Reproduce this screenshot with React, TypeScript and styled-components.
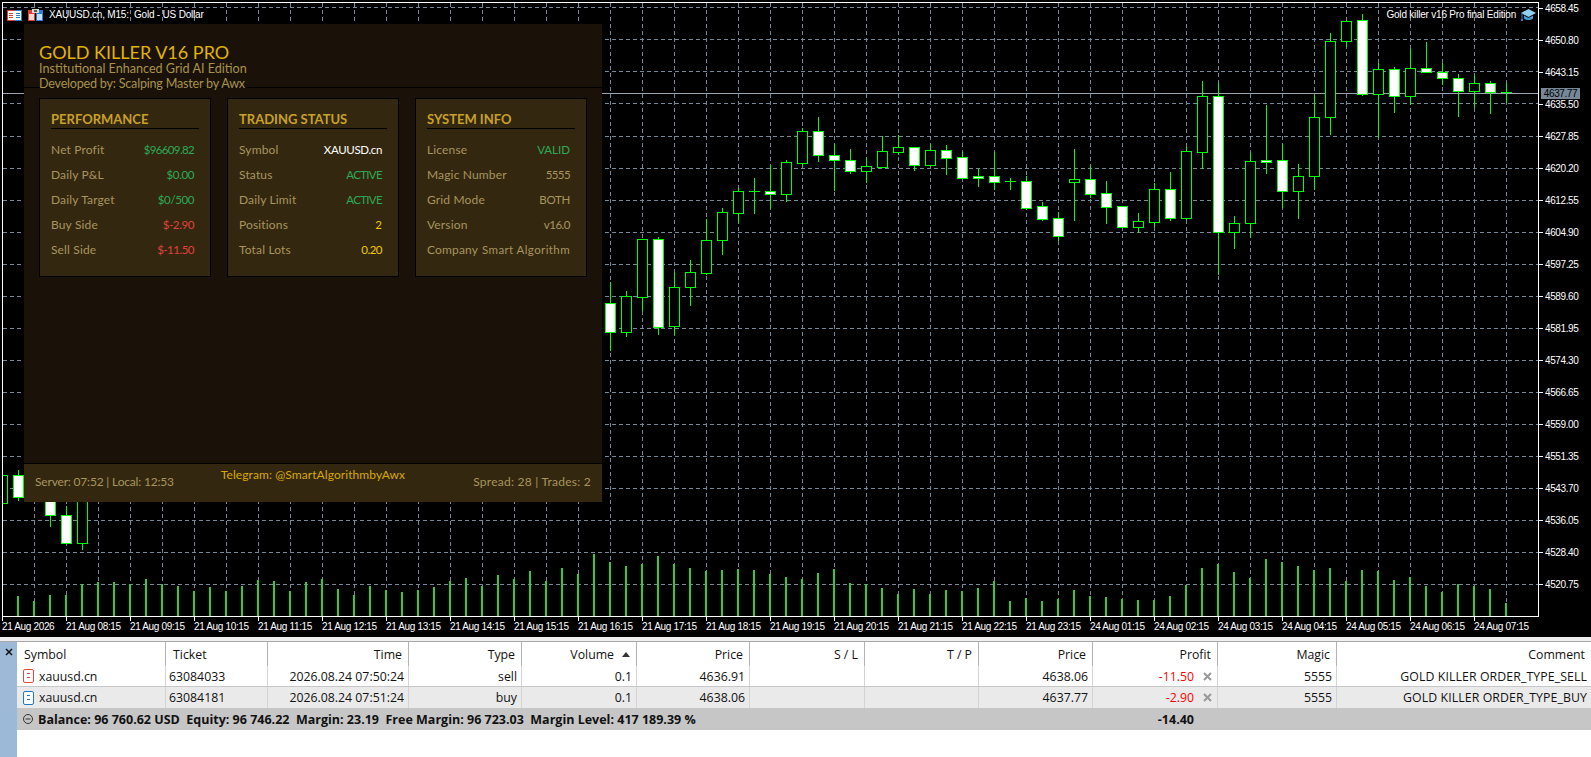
import styled, { createGlobalStyle } from "styled-components"

const GlobalStyle = createGlobalStyle`
  html, body { margin: 0; padding: 0; background: #f0f0f0; overflow: hidden; }
`

// k, wick top, wick bottom, body top, body bottom, filled
type Candle = [number, number, number, number, number, boolean]
const candles: Candle[] = [
  [-1, 470, 508, 475, 503, false], [0, 470, 501, 475, 497, true], [2, 495, 527, 500, 515, true],
  [3, 506, 544, 515, 543, true], [4, 495, 550, 495, 543, false],
  [37, 282, 351, 303, 332, true], [38, 291, 337, 296, 332, false], [39, 239, 311, 239, 297, false],
  [40, 237, 335, 239, 327, true], [41, 272, 335, 287, 326, false], [42, 260, 306, 272, 287, false],
  [43, 219, 275, 240, 273, false], [44, 208, 255, 212, 240, false], [45, 188, 223, 191, 213, false],
  [46, 178, 214, 191, 191, false], [47, 165, 209, 191, 194, true], [48, 160, 202, 162, 194, false],
  [49, 128, 166, 131, 163, false], [50, 117, 162, 131, 155, true], [51, 144, 191, 155, 160, true],
  [52, 149, 174, 160, 171, true], [53, 158, 183, 166, 171, false], [54, 136, 168, 151, 167, false],
  [55, 135, 155, 147, 152, false], [56, 147, 171, 147, 165, true], [57, 144, 165, 150, 165, false],
  [58, 145, 175, 150, 158, true], [59, 152, 178, 157, 178, true], [60, 169, 187, 176, 178, true],
  [61, 152, 190, 176, 182, true], [62, 178, 190, 181, 181, false], [63, 176, 210, 181, 208, true],
  [64, 202, 221, 206, 219, true], [65, 212, 241, 218, 236, true], [66, 149, 221, 179, 182, false],
  [67, 165, 198, 179, 194, true], [68, 181, 224, 193, 207, true], [69, 206, 227, 206, 227, true],
  [70, 213, 233, 221, 227, false], [71, 183, 227, 189, 222, false], [72, 172, 221, 189, 218, true],
  [73, 147, 220, 151, 218, false], [74, 81, 169, 96, 152, false], [75, 83, 275, 96, 232, true],
  [76, 216, 249, 223, 232, false], [77, 153, 238, 161, 223, false], [78, 105, 174, 160, 162, true],
  [79, 144, 208, 160, 191, true], [80, 164, 219, 176, 191, false], [81, 95, 190, 117, 176, false],
  [82, 33, 135, 41, 117, false], [83, 20, 47, 21, 41, false], [84, 14, 96, 20, 94, true],
  [85, 63, 138, 69, 94, false], [86, 67, 113, 69, 96, true], [87, 49, 105, 68, 96, false],
  [88, 42, 73, 68, 72, true], [89, 63, 85, 72, 78, true], [90, 74, 117, 78, 91, true],
  [91, 75, 108, 83, 91, false], [92, 81, 114, 83, 92, true], [93, 83, 103, 92, 92, false],
]

// top of each volume bar, in page pixels
const volumes = [
  168, 183, 165, 165, 132, 126, 126, 132, 117, 132, 138, 152, 141, 152, 138, 120, 123, 152, 126, 117,
  147, 165, 138, 150, 156, 150, 141, 123, 114, 138, 105, 117, 93, 123, 84, 102, 42, 66, 78, 72, 48,
  72, 84, 93, 90, 87, 90, 102, 111, 117, 99, 87, 129, 132, 144, 162, 147, 162, 150, 153, 144, 123,
  183, 174, 183, 177, 150, 168, 171, 177, 180, 180, 168, 136, 84, 72, 96, 114, 57, 66, 78, 90, 84,
  123, 90, 93, 120, 111, 138, 156, 132, 138, 147, 188,
].map((z) => Math.round(540 + z / 3))

const prices = [
  "4658.45", "4650.80", "4643.15", "4635.50", "4627.85", "4620.20", "4612.55", "4604.90", "4597.25",
  "4589.60", "4581.95", "4574.30", "4566.65", "4559.00", "4551.35", "4543.70", "4536.05", "4528.40", "4520.75",
]

const times = [
  "21 Aug 2026", "21 Aug 08:15", "21 Aug 09:15", "21 Aug 10:15", "21 Aug 11:15", "21 Aug 12:15",
  "21 Aug 13:15", "21 Aug 14:15", "21 Aug 15:15", "21 Aug 16:15", "21 Aug 17:15", "21 Aug 18:15",
  "21 Aug 19:15", "21 Aug 20:15", "21 Aug 21:15", "21 Aug 22:15", "21 Aug 23:15", "24 Aug 01:15",
  "24 Aug 02:15", "24 Aug 03:15", "24 Aug 04:15", "24 Aug 05:15", "24 Aug 06:15", "24 Aug 07:15",
]

const gridY = prices.map((_, i) => Math.round(7.3 + i * 32.06))
const gridX = Array.from({ length: 47 }, (_, i) => 34 + i * 32)

const GREEN = "#2ea85a"
const RED = "#e04040"
const YELLOW = "#f0c800"

const Page = styled.div`
  width: 1591px;
  height: 757px;
  display: flex;
  flex-direction: column;
  overflow: hidden;
  background: #f0f0f0;
`

const ChartWindow = styled.div`
  height: 637px;
  flex: none;
  background: #000;
  display: grid;
  grid-template-columns: 1539px 52px;
  grid-template-rows: 617px 20px;
  font-family: "Liberation Sans", sans-serif;
`

const Plot = styled.div`
  position: relative;
  margin: 2px 0 0 2px;
  border: 1px solid #fff;
`

const ChartSvg = styled.svg`
  position: absolute;
  left: 0;
  top: 0;
  display: block;
`

const ChartTitle = styled.div`
  position: absolute;
  left: 4px;
  top: 3px;
  display: flex;
  align-items: center;
  gap: 6px;
  color: #fff;
  font-size: 10px;
  letter-spacing: -0.2px;
  line-height: 18px;
  white-space: pre;
`

const ExpertLabel = styled.div`
  position: absolute;
  right: 2px;
  top: 3px;
  display: flex;
  align-items: center;
  gap: 5px;
  color: #fff;
  font-size: 10px;
  letter-spacing: -0.2px;
  line-height: 18px;
`

const PriceAxis = styled.div`
  position: relative;
  margin-top: -8px;
  display: flex;
  flex-direction: column;
`

const PriceLabel = styled.div`
  height: 32.06px;
  flex: none;
  display: flex;
  align-items: center;
  gap: 2px;
  color: #fff;
  font-size: 10px;
  letter-spacing: -0.4px;
  &::before {
    content: "";
    width: 4px;
    height: 1px;
    background: #fff;
    flex: none;
  }
`

const PriceTag = styled.div`
  position: absolute;
  left: 2px;
  top: 96px;
  width: 39px;
  height: 11px;
  background: #778899;
  color: #000;
  font-size: 10px;
  line-height: 11px;
  letter-spacing: -0.4px;
  text-align: center;
`

const TimeAxis = styled.div`
  grid-column: 1 / 3;
  padding-left: 2px;
  display: flex;
`

const TimeLabel = styled.div`
  width: 64px;
  flex: none;
  position: relative;
  padding-top: 4px;
  color: #fff;
  font-size: 10px;
  letter-spacing: -0.35px;
  line-height: 12px;
  white-space: nowrap;
  &::before {
    content: "";
    position: absolute;
    left: 0;
    top: 0;
    width: 1px;
    height: 4px;
    background: #fff;
  }
`

const Panel = styled.div`
  position: absolute;
  left: 21px;
  top: 21px;
  width: 578px;
  height: 478px;
  display: flex;
  flex-direction: column;
  background: #1a1208;
  font-family: Lato, sans-serif;
`

const PanelHeader = styled.div`
  height: 64px;
  flex: none;
  box-sizing: border-box;
  padding: 19px 0 0 15px;
  border-bottom: 1px solid #000;
`

const Title = styled.div`
  color: #e0b400;
  font-size: 18px;
  line-height: 18px;
`

const Subtitle = styled.div<{ $spacing?: number }>`
  color: #a8924c;
  font-size: 12.6px;
  line-height: 15px;
  letter-spacing: ${(p) => p.$spacing || 0}px;
  white-space: nowrap;
`

const Cards = styled.div`
  display: grid;
  grid-template-columns: repeat(3, 172px);
  gap: 16px;
  padding: 10px 15px 0;
`

const Card = styled.div`
  height: 179px;
  box-sizing: border-box;
  padding: 11px 11px 0 11px;
  background: #33280f;
  border: 1px solid #000;
`

const CardTitle = styled.div`
  color: #c8a02c;
  font-size: 13px;
  font-weight: 700;
  line-height: 18px;
  border-bottom: 1px solid #000;
  margin-bottom: 8px;
`

const Row = styled.div`
  height: 25px;
  padding-right: 5px;
  display: flex;
  justify-content: space-between;
  align-items: center;
  font-size: 11.5px;
`

const RowLabel = styled.span`
  color: #a8945f;
  font-size: 12px;
  letter-spacing: 0.15px;
`

const RowValue = styled.span<{ $tone?: string; $spacing?: number }>`
  color: ${(p) => p.$tone || "#a8945f"};
  letter-spacing: ${(p) => p.$spacing || 0}px;
`

const PanelFooter = styled.div`
  margin-top: auto;
  height: 39px;
  box-sizing: border-box;
  padding: 0 11px;
  background: #33280f;
  border-top: 1px solid #000;
  display: grid;
  grid-template-columns: 1fr auto 1fr;
  font-size: 12px;
`

const FooterText = styled.span<{ $right?: boolean }>`
  color: #a8945f;
  padding-top: 10px;
  line-height: 16px;
  text-align: ${(p) => (p.$right ? "right" : "left")};
  letter-spacing: ${(p) => (p.$right ? "0.25px" : "-0.18px")};
`

const Telegram = styled.span`
  color: #d8a800;
  padding-top: 3px;
  line-height: 16px;
  letter-spacing: 0.08px;
`

const Terminal = styled.div`
  flex: 1;
  margin-top: 4px;
  display: flex;
  border-top: 1px solid #a8a8a8;
  background: #fff;
  font-family: "Open Sans", sans-serif;
  font-size: 12.3px;
  color: #111;
`

const SideStrip = styled.div`
  width: 17px;
  flex: none;
  background: #9db9d8;
  display: flex;
  justify-content: center;
  padding-top: 6px;
  box-sizing: border-box;
`

const Table = styled.div`
  flex: 1;
  min-width: 0;
`

const columns = "149px 102px 141px 113px 115px 113px 115px 114px 114px 125px 119px 254px"

const HeaderRow = styled.div`
  display: grid;
  grid-template-columns: ${columns};
  height: 24px;
`

const HeaderCell = styled.div<{ $left?: boolean }>`
  display: flex;
  align-items: center;
  justify-content: ${(p) => (p.$left ? "flex-start" : "flex-end")};
  gap: 8px;
  padding: ${(p) => (p.$left ? "0 0 0 7px" : "0 6px 0 0")};
  border-right: 1px solid #b4b4b4;
  box-sizing: border-box;
  white-space: nowrap;
  &:last-child { border-right: 0; }
`

const DataRow = styled.div<{ $alt?: boolean }>`
  display: grid;
  grid-template-columns: ${columns};
  height: 21px;
  box-sizing: border-box;
  background: ${(p) => (p.$alt ? "#eaeaea" : "#fff")};
  border-bottom: ${(p) => (p.$alt ? "0" : "1px solid #c8c8c8")};
`

const DataCell = styled.div<{ $left?: boolean }>`
  display: flex;
  align-items: center;
  justify-content: ${(p) => (p.$left ? "flex-start" : "flex-end")};
  padding: ${(p) => (p.$left ? "0 0 0 3px" : "0 4px 0 0")};
  border-right: 1px solid #d4d4d4;
  box-sizing: border-box;
  white-space: nowrap;
  &:last-child { border-right: 0; letter-spacing: 0.1px; }
`

const SymbolCell = styled(DataCell)`
  padding-left: 6px;
  gap: 5px;
`

const ProfitCell = styled(DataCell)`
  padding-right: 5px;
  gap: 9px;
  color: #ff0000;
`

const SummaryRow = styled.div`
  display: grid;
  grid-template-columns: 1075px 125px;
  height: 22px;
  background: #c6c6c6;
  font-size: 12.5px;
  font-weight: 700;
`

const SummaryText = styled.div`
  display: flex;
  align-items: center;
  gap: 5px;
  padding-left: 6px;
  white-space: pre;
`

const SummaryProfit = styled.div`
  display: flex;
  align-items: center;
  justify-content: flex-end;
  padding-right: 23px;
`

function PositionIcon({ color }: { color: string }) {
  return (
    <svg width="11" height="14" viewBox="0 0 11 14">
      <rect x="0.5" y="0.5" width="10" height="13" rx="1.5" fill="#fff" stroke={color} />
      <path d="M4 4.5h3M4 8.5h3" stroke={color} />
    </svg>
  )
}

function CloseMark() {
  return (
    <svg width="9" height="9" viewBox="0 0 9 9">
      <path d="M1 1l7 7M8 1l-7 7" stroke="#999" strokeWidth="2" />
    </svg>
  )
}

function TableIcon() {
  return (
    <svg width="15" height="11" viewBox="0 0 15 11" shapeRendering="crispEdges">
      <rect x="0.5" y="0.5" width="14" height="10" fill="#fff" stroke="#e04030" />
      <rect x="8" y="1" width="6" height="9" fill="#fff" stroke="none" />
      <path d="M8 .5h6.5v10H8" fill="none" stroke="#2a7fd0" />
      <path d="M2 3.5h4M2 5.5h4M2 7.5h4" stroke="#e04030" />
      <path d="M9 3.5h4M9 5.5h4M9 7.5h4" stroke="#2a7fd0" />
    </svg>
  )
}

function SaveIcon() {
  return (
    <svg width="15" height="12" viewBox="0 0 15 12" shapeRendering="crispEdges">
      <path d="M0 1h7v11H0z" fill="#e04030" />
      <path d="M8 1h7v11H8z" fill="#2a7fd0" />
      <path d="M1 5h5v6H1z" fill="#ffd8d0" />
      <path d="M9 5h5v6H9z" fill="#bfe0ff" />
      <path d="M4 0h7v4H4z" fill="#d8d8d8" />
      <path d="M6 1h3v2H6z" fill="#555" />
    </svg>
  )
}

function CapIcon() {
  return (
    <svg width="15" height="14" viewBox="0 0 15 14">
      <path d="M7.5 1L15 5l-7.5 4L0 5z" fill="#8fd0f0" />
      <path d="M3 7.5v3c2.5 2 6.5 2 9 0v-3L7.5 10z" fill="#3a9fd8" />
      <path d="M1 5v6" stroke="#2f7fc0" />
      <rect x="0" y="11" width="2" height="2" fill="#2f7fc0" />
    </svg>
  )
}

function ChartDrawing() {
  return (
    <ChartSvg width="1535" height="613" viewBox="3 3 1535 613" shapeRendering="crispEdges">
      <g stroke="#778899" strokeDasharray="4 3">
        {gridY.map((y) => (
          <line key={y} x1="3" x2="1538" y1={y + 0.5} y2={y + 0.5} />
        ))}
        {gridX.map((x) => (
          <line key={x} x1={x + 0.5} x2={x + 0.5} y1="3" y2="616" />
        ))}
      </g>
      {volumes.map((top, k) => (
        <rect key={k} x={17 + k * 16} y={top} width="2" height={616 - top} fill="#32cd32" />
      ))}
      <line x1="3" x2="1538" y1="93.5" y2="93.5" stroke="#9aa4ae" />
      {candles.map(([k, wt, wb, bt, bb, filled]) => {
        const cx = 18 + k * 16
        return (
          <g key={k}>
            <line x1={cx + 0.5} x2={cx + 0.5} y1={wt} y2={wb} stroke="#00ff00" />
            {bt === bb ? (
              <line x1={cx - 5} x2={cx + 6} y1={bt + 0.5} y2={bt + 0.5} stroke="#00ff00" />
            ) : (
              <rect
                x={cx - 4.5}
                y={bt + 0.5}
                width="10"
                height={bb - bt}
                fill={filled ? "#fff" : "#000"}
                stroke="#00ff00"
              />
            )}
          </g>
        )
      })}
    </ChartSvg>
  )
}

function App() {
  return (
    <Page>
      <GlobalStyle />
      <ChartWindow>
        <Plot>
          <ChartDrawing />
          <ChartTitle>
            <TableIcon />
            <SaveIcon />
            <span>XAUUSD.cn, M15:  Gold - US Dollar</span>
          </ChartTitle>
          <ExpertLabel>
            <span>Gold killer v16 Pro final Edition</span>
            <CapIcon />
          </ExpertLabel>
          <Panel>
            <PanelHeader>
              <Title>GOLD KILLER V16 PRO</Title>
              <Subtitle>Institutional Enhanced Grid AI Edition</Subtitle>
              <Subtitle $spacing={-0.22}>Developed by: Scalping Master by Awx</Subtitle>
            </PanelHeader>
            <Cards>
              <Card>
                <CardTitle>PERFORMANCE</CardTitle>
                <Row><RowLabel>Net Profit</RowLabel><RowValue $tone={GREEN} $spacing={-0.65}>$96609.82</RowValue></Row>
                <Row><RowLabel>Daily P&amp;L</RowLabel><RowValue $tone={GREEN} $spacing={-0.4}>$0.00</RowValue></Row>
                <Row><RowLabel>Daily Target</RowLabel><RowValue $tone={GREEN} $spacing={-0.4}>$0/500</RowValue></Row>
                <Row><RowLabel>Buy Side</RowLabel><RowValue $tone={RED} $spacing={-0.4}>$-2.90</RowValue></Row>
                <Row><RowLabel>Sell Side</RowLabel><RowValue $tone={RED} $spacing={-0.5}>$-11.50</RowValue></Row>
              </Card>
              <Card>
                <CardTitle>TRADING STATUS</CardTitle>
                <Row><RowLabel>Symbol</RowLabel><RowValue $tone="#ffffff" $spacing={-0.35}>XAUUSD.cn</RowValue></Row>
                <Row><RowLabel>Status</RowLabel><RowValue $tone={GREEN} $spacing={-0.65}>ACTIVE</RowValue></Row>
                <Row><RowLabel>Daily Limit</RowLabel><RowValue $tone={GREEN} $spacing={-0.65}>ACTIVE</RowValue></Row>
                <Row><RowLabel>Positions</RowLabel><RowValue $tone={YELLOW}>2</RowValue></Row>
                <Row><RowLabel>Total Lots</RowLabel><RowValue $tone={YELLOW} $spacing={-0.5}>0.20</RowValue></Row>
              </Card>
              <Card>
                <CardTitle>SYSTEM INFO</CardTitle>
                <Row><RowLabel>License</RowLabel><RowValue $tone={GREEN}>VALID</RowValue></Row>
                <Row><RowLabel>Magic Number</RowLabel><RowValue $spacing={-0.6}>5555</RowValue></Row>
                <Row><RowLabel>Grid Mode</RowLabel><RowValue $spacing={-0.3}>BOTH</RowValue></Row>
                <Row><RowLabel>Version</RowLabel><RowValue $spacing={-0.5}>v16.0</RowValue></Row>
                <Row><RowLabel>Company</RowLabel><RowValue $spacing={0.4}>Smart Algorithm</RowValue></Row>
              </Card>
            </Cards>
            <PanelFooter>
              <FooterText>Server: 07:52 | Local: 12:53</FooterText>
              <Telegram>Telegram: @SmartAlgorithmbyAwx</Telegram>
              <FooterText $right>Spread: 28 | Trades: 2</FooterText>
            </PanelFooter>
          </Panel>
        </Plot>
        <PriceAxis>
          {prices.map((p) => (
            <PriceLabel key={p}>{p}</PriceLabel>
          ))}
          <PriceTag>4637.77</PriceTag>
        </PriceAxis>
        <TimeAxis>
          {times.map((t) => (
            <TimeLabel key={t}>{t}</TimeLabel>
          ))}
        </TimeAxis>
      </ChartWindow>
      <Terminal>
        <SideStrip>
          <svg width="8" height="8" viewBox="0 0 8 8">
            <path d="M1 1l6 6M7 1l-6 6" stroke="#111" strokeWidth="1.5" />
          </svg>
        </SideStrip>
        <Table>
          <HeaderRow>
            <HeaderCell $left>Symbol</HeaderCell>
            <HeaderCell $left>Ticket</HeaderCell>
            <HeaderCell>Time</HeaderCell>
            <HeaderCell>Type</HeaderCell>
            <HeaderCell>
              Volume
              <svg width="8" height="5" viewBox="0 0 8 5"><path d="M4 0l4 5H0z" fill="#333" /></svg>
            </HeaderCell>
            <HeaderCell>Price</HeaderCell>
            <HeaderCell>S / L</HeaderCell>
            <HeaderCell>T / P</HeaderCell>
            <HeaderCell>Price</HeaderCell>
            <HeaderCell>Profit</HeaderCell>
            <HeaderCell>Magic</HeaderCell>
            <HeaderCell>Comment</HeaderCell>
          </HeaderRow>
          <DataRow>
            <SymbolCell $left><PositionIcon color="#e04a40" />xauusd.cn</SymbolCell>
            <DataCell $left>63084033</DataCell>
            <DataCell>2026.08.24 07:50:24</DataCell>
            <DataCell>sell</DataCell>
            <DataCell>0.1</DataCell>
            <DataCell>4636.91</DataCell>
            <DataCell />
            <DataCell />
            <DataCell>4638.06</DataCell>
            <ProfitCell>-11.50<CloseMark /></ProfitCell>
            <DataCell>5555</DataCell>
            <DataCell>GOLD KILLER ORDER_TYPE_SELL</DataCell>
          </DataRow>
          <DataRow $alt>
            <SymbolCell $left><PositionIcon color="#1f78c0" />xauusd.cn</SymbolCell>
            <DataCell $left>63084181</DataCell>
            <DataCell>2026.08.24 07:51:24</DataCell>
            <DataCell>buy</DataCell>
            <DataCell>0.1</DataCell>
            <DataCell>4638.06</DataCell>
            <DataCell />
            <DataCell />
            <DataCell>4637.77</DataCell>
            <ProfitCell>-2.90<CloseMark /></ProfitCell>
            <DataCell>5555</DataCell>
            <DataCell>GOLD KILLER ORDER_TYPE_BUY</DataCell>
          </DataRow>
          <SummaryRow>
            <SummaryText>
              <svg width="10" height="10" viewBox="0 0 10 10">
                <circle cx="5" cy="5" r="4.5" fill="none" stroke="#333" />
                <path d="M2.5 5h5" stroke="#333" />
              </svg>
              <span>Balance: 96 760.62 USD  Equity: 96 746.22  Margin: 23.19  Free Margin: 96 723.03  Margin Level: 417 189.39 %</span>
            </SummaryText>
            <SummaryProfit>-14.40</SummaryProfit>
          </SummaryRow>
        </Table>
      </Terminal>
    </Page>
  )
}

export default App
